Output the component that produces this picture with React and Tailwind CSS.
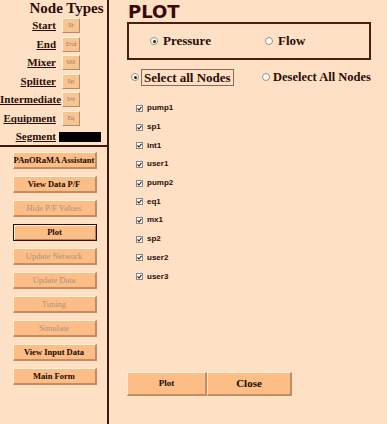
const nodeTypes = [
  { label: 'Start', btn: 'St' },
  { label: 'End', btn: 'End' },
  { label: 'Mixer', btn: 'MX' },
  { label: 'Splitter', btn: 'Sp' },
  { label: 'Intermediate', btn: 'Int' },
  { label: 'Equipment', btn: 'Eq' },
];

const menuButtons = [
  { label: 'PAnORaMA Assistant', enabled: true },
  { label: 'View Data P/F', enabled: true },
  { label: 'Hide P/F Values', enabled: false },
  { label: 'Plot', enabled: true, selected: true },
  { label: 'Update Network', enabled: false },
  { label: 'Update Data', enabled: false },
  { label: 'Tuning', enabled: false },
  { label: 'Simulate', enabled: false },
  { label: 'View Input Data', enabled: true },
  { label: 'Main Form', enabled: true },
];

const nodes = ['pump1', 'sp1', 'int1', 'user1', 'pump2', 'eq1', 'mx1', 'sp2', 'user2', 'user3'];

const serif = "font-['Liberation_Serif','DejaVu_Serif',serif]";

const Radio = ({ checked }) => (
  <span className="inline-flex w-[8px] h-[8px] rounded-full border border-[#9a9088] bg-white items-center justify-center shrink-0">
    {checked && <span className="w-[3px] h-[3px] rounded-full bg-[#222]" />}
  </span>
);

const Check = () => (
  <span className="inline-flex w-[7px] h-[7px] border border-[#8a8680] bg-white items-center justify-center shrink-0">
    <svg width="5" height="5" viewBox="0 0 5 5">
      <path d="M0.5 2.5 L2 4 L4.5 0.8" stroke="#222" strokeWidth="1.1" fill="none" />
    </svg>
  </span>
);

const MenuButton = ({ label, enabled, selected }) => (
  <button
    className={`w-[84px] h-[17px] bg-[#fcbd86] text-[8.5px] leading-none ${serif} ${
      selected
        ? 'border border-[#2a1408] shadow-[inset_1px_1px_0_#fff0dc,inset_-1px_-1px_0_#b08060]'
        : 'border-t border-l border-t-[#fff0dc] border-l-[#fff0dc] border-b-2 border-r-2 border-b-[#c48c60] border-r-[#c48c60]'
    } ${enabled ? 'font-bold text-[#1a0a04]' : 'text-[#a89580]'}`}
  >
    {label}
  </button>
);

const App = () => {
  return (
    <div className="w-[387px] h-[424px] bg-[#fee1c5] flex overflow-hidden text-[#2b0c08]">
      <div className="w-[109px] h-full border-r-2 border-[#3a1a10] flex flex-col">
        <div className="border-b-2 border-[#3a1a10] h-[147px]">
          <h2 className={`${serif} font-bold text-[15px] leading-none text-center pl-[26px] pt-[1px]`}>Node Types</h2>
          <div className="grid grid-cols-[56px_auto] gap-x-[6px] gap-y-[3.5px] mt-[2px] items-center">
            {nodeTypes.map((n) => (
              <div key={n.label} className="contents">
                <span className={`${serif} font-bold underline text-[11px] text-right leading-none`}>{n.label}</span>
                <span className="w-[18px] h-[15px] bg-[#f7c592] border-t border-l border-t-[#fff0dc] border-l-[#fff0dc] border-b border-r border-b-[#b98a66] border-r-[#b98a66] text-[6px] text-[#b07860] flex items-center justify-center">
                  {n.btn}
                </span>
              </div>
            ))}
            <span className={`${serif} font-bold underline text-[11px] text-right leading-none`}>Segment</span>
            <span className="h-[15px] flex items-center -ml-[3px]">
              <span className="w-[42px] h-[10px] bg-black" />
            </span>
          </div>
        </div>
        <div className="flex flex-col items-center gap-[7px] pt-[5px] pl-[2px]">
          {menuButtons.map((b) => (
            <MenuButton key={b.label} {...b} />
          ))}
        </div>
      </div>

      <div className="flex-1 flex flex-col pl-[18px]">
        <h1 className="font-['DejaVu_Sans',sans-serif] font-black text-[18px] leading-none text-[#3a0808] mt-[3px] ml-[1px]">
          PLOT
        </h1>
        <div className="w-[244px] h-[38px] border-2 border-[#4a1c12] mt-[1px] flex items-center">
          <label className={`flex items-center gap-[5px] ml-[21px] w-[115px] ${serif} font-bold text-[13px]`}>
            <Radio checked />
            Pressure
          </label>
          <label className={`flex items-center gap-[5px] ${serif} font-bold text-[13px]`}>
            <Radio />
            Flow
          </label>
        </div>
        <div className="flex items-center mt-[8px] h-[18px]">
          <label className={`flex items-center gap-[2px] ml-[4px] w-[131px] ${serif} font-bold text-[13px]`}>
            <Radio checked />
            <span className="border border-[#8a6a50] px-[2px] leading-[15px]">Select all Nodes</span>
          </label>
          <label className={`flex items-center gap-[3px] ${serif} font-bold text-[12.5px]`}>
            <Radio />
            Deselect All Nodes
          </label>
        </div>
        <div className="flex flex-col mt-[13px] ml-[9px]">
          {nodes.map((n) => (
            <div key={n} className="flex items-center gap-[4px] h-[18.7px]">
              <Check />
              <span className="font-['Liberation_Sans',Arial,sans-serif] font-bold text-[8px] text-[#2b0c08]">{n}</span>
            </div>
          ))}
        </div>
        <div className="flex mt-[86px]">
          <button className={`w-[80px] h-[24px] bg-[#fcbd86] border-t border-l border-t-[#fff0dc] border-l-[#fff0dc] border-b-2 border-r-2 border-b-[#c48c60] border-r-[#c48c60] ${serif} font-bold text-[9px] text-[#1a0a04]`}>
            Plot
          </button>
          <button className={`w-[85px] h-[24px] bg-[#fcbd86] border-t border-l border-t-[#fff0dc] border-l-[#fff0dc] border-b-2 border-r-2 border-b-[#c48c60] border-r-[#c48c60] ${serif} font-bold text-[11px] text-[#1a0a04]`}>
            Close
          </button>
        </div>
      </div>
    </div>
  );
};

export default App;
